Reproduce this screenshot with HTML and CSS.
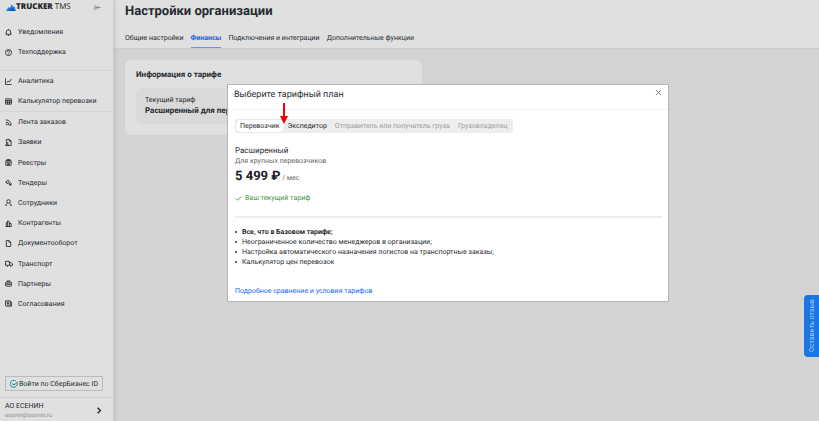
FILE: index.html
```html
<!DOCTYPE html>
<html lang="ru">
<head>
<meta charset="utf-8">
<title>Настройки организации</title>
<link rel="stylesheet" href="styles.css">
</head>
<body>
<div class="app">
  <aside class="sidebar">
    <div class="brand">
      <svg class="brand-mark" viewBox="0 0 20 14"><path fill="#1c7be0" d="M0 14 5 6l3 2 3-7 4 5 2-1 3 9z"/><path fill="#1157b0" d="M6 14l3-5 3 2 2-3 4 6z"/></svg>
      <span class="brand-name"><b>TRUCKER</b> TMS</span>
      <button class="collapse" type="button" aria-label="Свернуть меню"><svg class="icon" viewBox="0 0 16 16"><path d="M2 2v12M15 8H5M9 4 5 8l4 4"/></svg></button>
    </div>
    <nav class="nav">
      <ul class="group group-help">
        <li><a href="#"><svg class="icon" viewBox="0 0 16 16"><path d="M3 12V7a5 5 0 0 1 10 0v5M1 12h14M6 15h4M8 0v2"/></svg>Уведомления</a></li>
        <li><a href="#"><svg class="icon" viewBox="0 0 16 16"><circle cx="8" cy="8" r="7"/><path d="M5.500 6.500a2.500 2.500 0 1 1 3.500 2.200c-.8.4-1 .8-1 1.300M8 11.500v1.500"/></svg>Техподдержка</a></li>
      </ul>
      <ul class="group group-tools">
        <li><a href="#"><svg class="icon" viewBox="0 0 16 16"><path d="M1 1v14h14M4 11l3-4 3 2 5-7"/></svg>Аналитика</a></li>
        <li><a href="#"><svg class="icon" viewBox="0 0 16 16"><rect x="1" y="2" width="14" height="12" rx="1"/><path d="M1 5.500h14M1 9.700h14M6 5.500V14M10.500 5.500V14"/></svg>Калькулятор перевозки</a></li>
      </ul>
      <ul class="group group-main">
        <li><a href="#"><svg class="icon" viewBox="0 0 16 16"><path d="M2 7a7 7 0 0 1 7 7M2 11a3 3 0 0 1 3 3M2 2a12 12 0 0 1 12 12H9M2 14h1"/></svg>Лента заказов</a></li>
        <li><a href="#"><svg class="icon" viewBox="0 0 16 16"><path d="M3 6V1h7l4 4v10H8M10 1v4h4"/><circle cx="5" cy="9" r="2"/><path d="M1 15c0-4 8-4 8 0z"/></svg>Заявки</a></li>
        <li><a href="#"><svg class="icon" viewBox="0 0 16 16"><rect x="2" y="3" width="12" height="12" rx="1"/><path d="M5 1h6v3H5zM2 7h12M5 10h6M5 12.500h6"/></svg>Реестры</a></li>
        <li><a href="#"><svg class="icon" viewBox="0 0 16 16"><path d="M7 2 2 7l3 3 5-5zM8 8l6 6M9 11l3-3 3 3-3 4zM1 6l5 5"/></svg>Тендеры</a></li>
        <li><a href="#"><svg class="icon" viewBox="0 0 16 16"><circle cx="8" cy="5.500" r="4"/><path d="M2 15c0-3 2-5 4-5.500M14 15c0-3-2-5-4-5.500M1 15h3M12 15h3"/></svg>Сотрудники</a></li>
        <li><a href="#"><svg class="icon" viewBox="0 0 16 16"><path d="M1 15h14M3 15V6h3M6 15V2l4 2v11M10 8h4v7"/></svg>Контрагенты</a></li>
        <li><a href="#"><svg class="icon" viewBox="0 0 16 16"><path d="M3 1h6l4 4v10H3zM9 1v4h4"/></svg>Документооборот</a></li>
        <li><a href="#"><svg class="icon icon-wide" viewBox="0 0 18 16"><path d="M3 12H1V3h9v9H7M10 6h4l3 3v3h-2"/><circle cx="5" cy="13" r="1.500"/><circle cx="13" cy="13" r="1.500"/></svg>Транспорт</a></li>
        <li><a href="#"><svg class="icon" viewBox="0 0 16 16"><rect x="1" y="5" width="14" height="9" rx="2"/><path d="M5 5V2h6v3M1 9.500h14M6 8v3M10 8v3"/></svg>Партнеры</a></li>
        <li><a href="#"><svg class="icon" viewBox="0 0 16 16"><path d="M1 2h11v12H2l-1-1zM12 5h3v9h-3M4 5h5M4 8h5M4 11h5"/></svg>Согласования</a></li>
      </ul>
    </nav>
    <button class="sber" type="button"><svg viewBox="0 0 16 16"><path d="M14 5.500A7 7 0 1 1 11.500 2" fill="none" stroke="#138d96" stroke-width="2"/><path d="m4 7 4 3 7-6" fill="none" stroke="#16847a" stroke-width="2"/></svg>Войти по СберБизнес ID</button>
    <a class="account" href="#">
      <span><span class="account-name">АО ЕСЕНИН</span><span class="account-mail">esenin@esenin.ru</span></span>
      <svg class="chevron" viewBox="0 0 8 10"><path d="m2 1 4 4-4 4"/></svg>
    </a>
  </aside>
  <main class="main">
    <header class="head">
      <h1>Настройки организации</h1>
      <nav class="tabs">
        <a href="#">Общие настройки</a>
        <a class="active" href="#">Финансы</a>
        <a href="#">Подключения и интеграции</a>
        <a href="#">Дополнительные функции</a>
      </nav>
    </header>
    <section class="card">
      <h2>Информация о тарифе</h2>
      <div class="plan">
        <div class="plan-label">Текущий тариф</div>
        <div class="plan-name">Расширенный для перевозчиков</div>
      </div>
    </section>
  </main>
</div>
<button class="feedback" type="button">Оставить отзыв</button>
<div class="modal" role="dialog" aria-labelledby="modal-title">
  <div class="modal-head">
    <h2 id="modal-title">Выберите тарифный план</h2>
    <button class="close" type="button" aria-label="Закрыть"><svg viewBox="0 0 8 8"><path d="m1 1 6 6M7 1 1 7"/></svg></button>
  </div>
  <div class="modal-body">
    <div class="segments">
      <button class="selected" type="button">Перевозчик</button>
      <button type="button">Экспедитор</button>
      <button type="button" disabled>Отправитель или получатель груза</button>
      <button type="button" disabled>Грузовладелец</button>
      <svg class="pointer" viewBox="0 0 8 21"><path d="M3 0h2v13h3L4 21 0 13h3z"/></svg>
    </div>
    <h3>Расширенный</h3>
    <p class="subtitle">Для крупных перевозчиков</p>
    <p class="price"><strong>5 499 ₽</strong> / мес</p>
    <p class="current"><svg viewBox="0 0 8 8"><path d="m1 4 2 2 4-4"/></svg>Ваш текущий тариф</p>
    <hr>
    <ul class="features">
      <li><b>Все, что в Базовом тарифе;</b></li>
      <li>Неограниченное количество менеджеров в организации;</li>
      <li>Настройка автоматического назначения логистов на транспортные заказы;</li>
      <li>Калькулятор цен перевозок</li>
    </ul>
    <a class="compare" href="#">Подробное сравнение и условия тарифов</a>
  </div>
</div>
</body>
</html>
```
FILE: styles.css
```css
* { box-sizing: border-box; }
body { margin: 0; font: 7px/10px Roboto, sans-serif; text-rendering: geometricPrecision; color: #262b30; background: #d3d3d3; }
h1, h2, h3, p, ul { margin: 0; padding: 0; }
ul { list-style: none; }
a { color: inherit; text-decoration: none; }
button { margin: 0; padding: 0; border: 0; background: none; font: inherit; text-rendering: inherit; color: inherit; }
svg { display: block; flex: none; }

.app { display: flex; min-height: 100vh; }

.sidebar { display: flex; flex-direction: column; flex: none; width: 114px; background: #e0e0e0; border-right: 1px solid #cccccc; box-shadow: 1px 0 4px rgba(0, 0, 0, .12); z-index: 1; }
.brand { display: flex; align-items: center; height: 14px; padding: 0 12px 0 6px; }
.brand-mark { width: 10px; height: 7px; }
.brand-name { font: 8px/10px "Open Sans", sans-serif; color: #1f2226; white-space: nowrap; }
.brand-name b { font-weight: 800; }
.collapse { margin-left: auto; color: #777777; }
.icon { width: 7px; height: 7px; fill: none; stroke: currentColor; stroke-width: 2; }
.icon-wide { width: 8px; margin-right: -1px; }

.nav { display: flex; flex-direction: column; flex: 1; margin-bottom: 62px; }
.group { display: flex; flex-direction: column; }
.group li { display: flex; flex: 1 0 20px; align-items: center; }
.group a { display: flex; align-items: center; gap: 6px; padding-left: 5px; white-space: nowrap; }
.group-help { padding: 8px 0; }
.group-tools { border-top: 1px solid #d4d4d4; border-bottom: 1px solid #d4d4d4; }
.group-main { flex: 1; }

.sber { display: flex; align-items: center; justify-content: center; gap: 1px; height: 15px; margin: 0 10px 6px 5px; border: 1px solid #b9bcbe; white-space: nowrap; }
.sber svg { width: 8px; height: 8px; }
.account { display: flex; align-items: center; justify-content: space-between; height: 24px; padding: 2px 11px 0 5px; border-top: 1px solid #d0d0d0; }
.account-name, .account-mail { display: block; line-height: 9px; }
.account-mail { font-size: 6px; color: #8d8d8d; }
.chevron { width: 6px; height: 7px; fill: none; stroke: #262b30; stroke-width: 2; }

.main { flex: 1; min-width: 0; }
.head { padding: 4px 11px 0; background: #e0e0e0; border-bottom: 1px solid #cdcdcd; }
.head h1 { font-size: 13px; line-height: 16px; font-weight: 700; }
.tabs { display: flex; gap: 7px; margin-top: 11px; }
.tabs a { padding: 2px 0 4px; border-bottom: 1px solid transparent; white-space: nowrap; }
.tabs .active { color: #245fd8; font-weight: 700; border-bottom-color: #6b95e0; }
.card { max-width: 297px; margin: 11px; padding: 9px 11px 11px; background: #e0e0e0; border-radius: 6px; }
.card h2 { font-size: 8px; line-height: 12px; font-weight: 700; }
.plan { margin-top: 7px; padding: 7px 9px; background: #d9d9d9; border-radius: 6px; }
.plan-label { line-height: 10px; }
.plan-name { font-size: 8px; line-height: 12px; font-weight: 700; white-space: nowrap; }

.feedback { position: fixed; right: 0; top: 295px; width: 15px; height: 62px; padding-right: 2px; border-radius: 0 4px 4px 0; background: #1976e3; color: #a9cdf8; writing-mode: vertical-rl; transform: rotate(180deg); }

.modal { position: absolute; z-index: 2; top: 84px; left: 227px; right: 150px; background: #ffffff; border: 1px solid #b5b5b5; }
.modal-head { display: flex; align-items: flex-start; justify-content: space-between; height: 25px; padding: 4px 6px; border-bottom: 1px solid #f2f2f2; }
.modal-head h2 { font-size: 9px; line-height: 12px; font-weight: 400; }
.close svg { width: 7px; height: 7px; fill: none; stroke: #777777; stroke-width: 1; }
.modal-body { padding: 9px 6px 5px 7px; }
.segments { position: relative; display: flex; width: max-content; padding: 1px; background: #eeeeee; border-radius: 3px; }
.segments button { height: 12px; padding: 0 4px; border-radius: 3px; white-space: nowrap; }
.segments button:disabled { color: #9a9c9f; }
.segments .selected { background: #ffffff; box-shadow: 0 0 1px rgba(0, 0, 0, .3); }
.pointer { position: absolute; left: 45px; top: -16px; width: 8px; height: 21px; fill: #f00000; }
.modal h3 { margin-top: 13px; font-size: 8px; line-height: 10px; font-weight: 400; }
.subtitle { color: #65686c; }
.price { margin-top: 2px; line-height: 18px; color: #65686c; }
.price strong { font-size: 13px; color: #1c2024; }
.current { display: flex; align-items: center; gap: 3px; margin-top: 6px; color: #3a9a35; }
.current svg { width: 7px; height: 7px; fill: none; stroke: currentColor; stroke-width: 1; }
hr { height: 2px; margin: 13px 0 9px; border: 0; background: #eeeeee; }
.features li { display: flex; align-items: center; gap: 5px; }
.features li::before { content: ""; width: 2px; height: 2px; border-radius: 1px; background: #262b30; }
.compare { display: block; width: max-content; margin-top: 19px; color: #2468f2; }
```
